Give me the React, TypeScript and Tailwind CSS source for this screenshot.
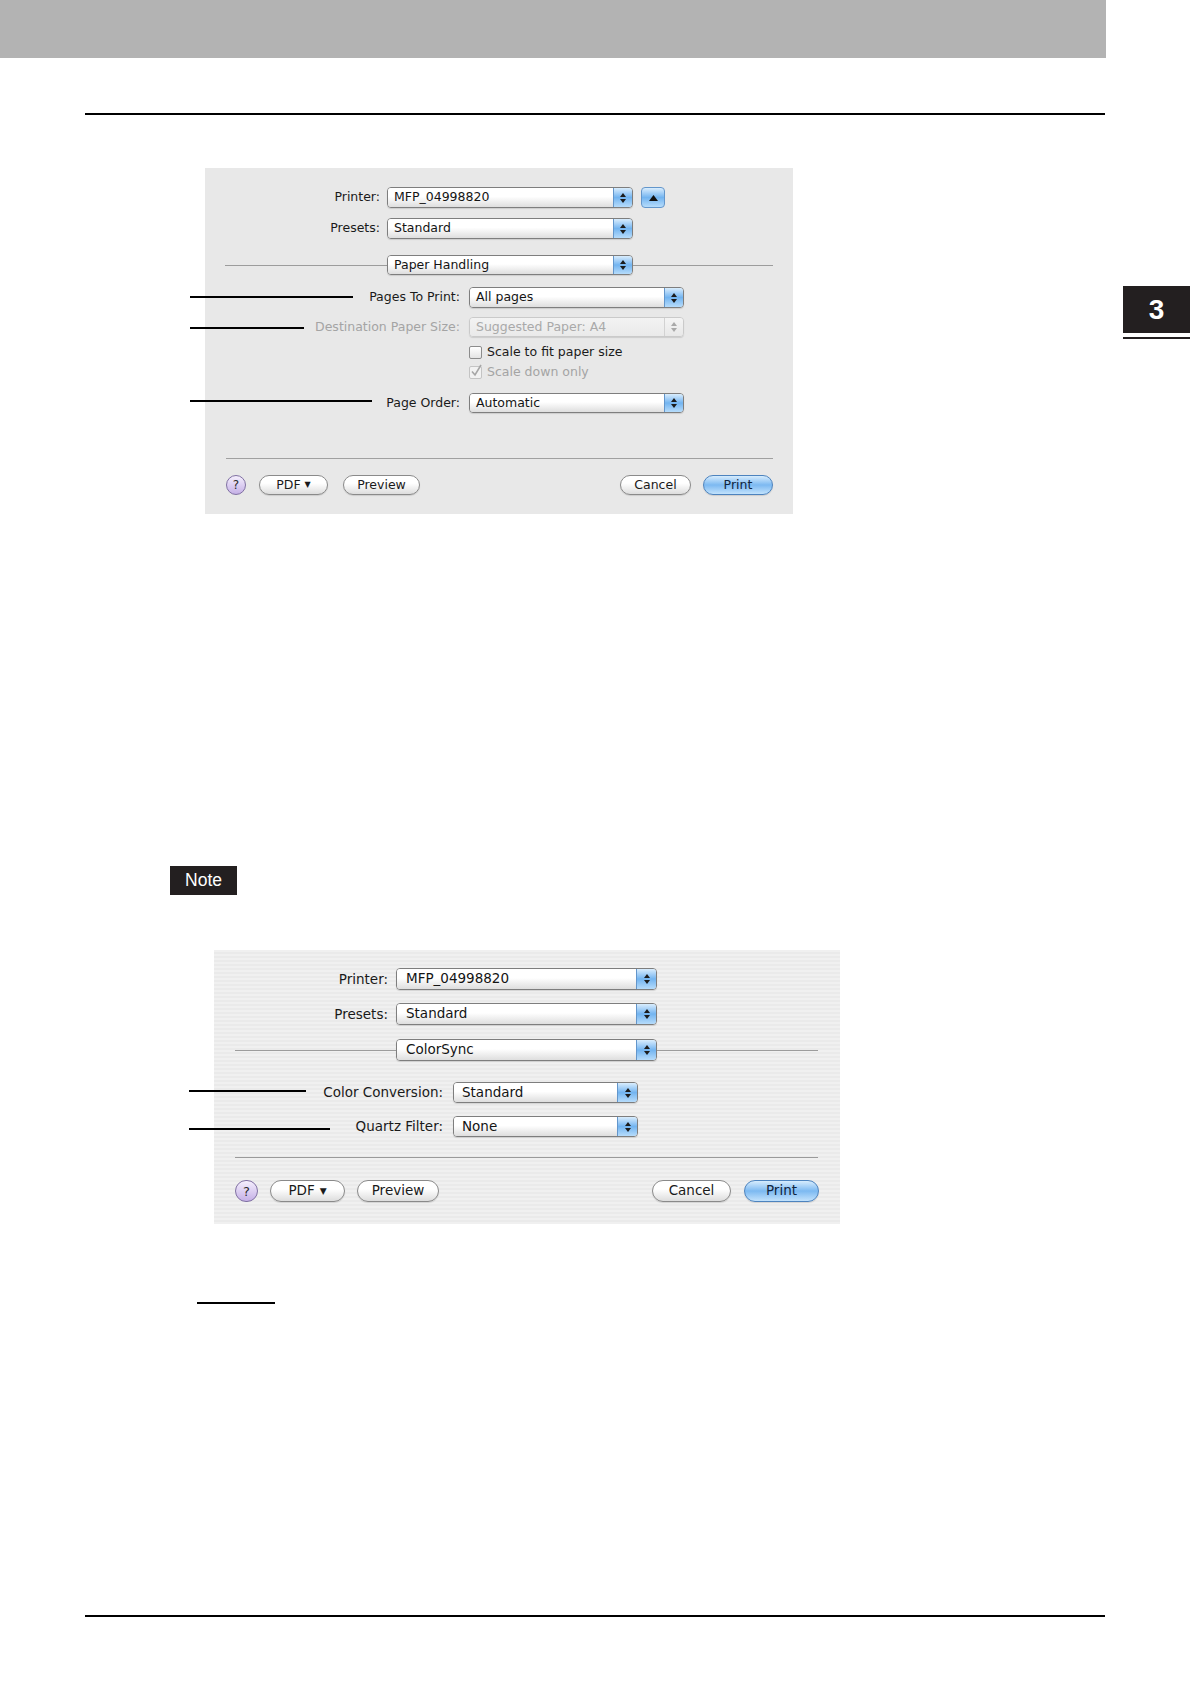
import React from "react";
import clsx from "clsx";

const Tri = ({ dir, color, w = 6, h = 4 }: { dir: "up" | "down"; color: string; w?: number; h?: number }) => (
  <svg width={w} height={h} viewBox="0 0 6 4" className="block">
    {dir === "up" ? <path d="M3 0L6 4H0Z" fill={color} /> : <path d="M0 0H6L3 4Z" fill={color} />}
  </svg>
);

function Popup({
  className,
  label,
  disabled = false,
  stepW = "w-[19px]",
  pad = "pl-[6px]",
}: {
  className?: string;
  label: string;
  disabled?: boolean;
  stepW?: string;
  pad?: string;
}) {
  return (
    <div
      className={clsx(
        "flex overflow-hidden rounded-[4px] border shadow-[0_1px_1px_rgba(0,0,0,0.12)]",
        disabled ? "border-[#cacaca]" : "border-[#7e7e7e]",
        className
      )}
    >
      <div
        className={clsx(
          "flex flex-1 items-center whitespace-nowrap leading-none bg-linear-to-b",
          pad,
          disabled ? "from-[#f3f3f3] to-[#eaeaea] text-[#a9a9a9]" : "from-white from-45% to-[#dedede] text-[#141414]"
        )}
      >
        {label}
      </div>
      <div
        className={clsx(
          "flex flex-col items-center justify-center gap-[2px] border-l",
          stepW,
          disabled
            ? "border-[#d2d2d2] bg-linear-to-b from-[#f4f4f4] to-[#e8e8e8]"
            : "border-[#6396cb] bg-linear-to-b from-[#d9edfd] via-[#72b4f0] to-[#b6dcfb]"
        )}
      >
        <Tri dir="up" color={disabled ? "#a9a9a9" : "#1c1c1c"} />
        <Tri dir="down" color={disabled ? "#a9a9a9" : "#1c1c1c"} />
      </div>
    </div>
  );
}

function Pill({
  className,
  children,
  primary = false,
}: {
  className?: string;
  children: React.ReactNode;
  primary?: boolean;
}) {
  return (
    <div
      className={clsx(
        "flex items-center justify-center rounded-full border leading-none shadow-[0_1px_1px_rgba(0,0,0,0.12)]",
        primary
          ? "border-[#4d83be] bg-linear-to-b from-[#d6ecfd] via-[#7cb9f1] to-[#c2e2fc] text-[#10243d]"
          : "border-[#8a8a8a] bg-linear-to-b from-white from-40% to-[#dddddd] text-[#1a1a1a]",
        className
      )}
    >
      {children}
    </div>
  );
}

function Help({ className }: { className?: string }) {
  return (
    <div
      className={clsx(
        "flex items-center justify-center rounded-full border border-[#8070a3] bg-linear-to-b from-[#f5effd] to-[#c5b0e6] leading-none text-[#2a2a2a]",
        className
      )}
    >
      ?
    </div>
  );
}

function Dialog1() {
  return (
    <div className="relative flex h-[346px] w-[588px] flex-col bg-[#e8e8e8] pt-[19px] text-[12.5px] text-[#1a1a1a] font-['DejaVu_Sans',sans-serif]">
      {/* Printer */}
      <div className="flex h-[21px] items-center">
        <div className="w-[175px] text-right">Printer:</div>
        <Popup className="ml-[7px] h-[21px] w-[246px]" label="MFP_04998820" />
        <div className="ml-[8px] flex h-[21px] w-[24px] items-center justify-center rounded-[4px] border border-[#6396cb] bg-linear-to-b from-[#d9edfd] via-[#72b4f0] to-[#b6dcfb]">
          <Tri dir="up" color="#111" w={9} h={6} />
        </div>
      </div>
      {/* Presets */}
      <div className="mt-[10px] flex h-[21px] items-center">
        <div className="w-[175px] text-right">Presets:</div>
        <Popup className="ml-[7px] h-[21px] w-[246px]" label="Standard" />
      </div>
      {/* Paper Handling */}
      <div className="mt-[16px] flex h-[20px] items-center">
        <div className="ml-[20px] h-px w-[162px] bg-[#9c9c9c]" />
        <Popup className="h-[20px] w-[246px]" label="Paper Handling" />
        <div className="h-px w-[140px] bg-[#9c9c9c]" />
      </div>
      {/* Pages To Print */}
      <div className="relative mt-[12px] flex h-[21px] items-center">
        <div className="absolute left-[-15px] top-[9px] h-[2px] w-[163px] bg-black" />
        <div className="w-[255px] text-right">Pages To Print:</div>
        <Popup className="ml-[9px] h-[21px] w-[215px]" label="All pages" />
      </div>
      {/* Destination */}
      <div className="relative mt-[9px] flex h-[20px] items-center">
        <div className="absolute left-[-15px] top-[10px] h-[2px] w-[114px] bg-black" />
        <div className="w-[255px] text-right text-[#a4a4a4]">Destination Paper Size:</div>
        <Popup className="ml-[9px] h-[20px] w-[215px]" label="Suggested Paper: A4" disabled />
      </div>
      {/* Scale to fit */}
      <div className="mt-[9px] flex h-[13px] items-center pl-[264px]">
        <div className="h-[13px] w-[13px] rounded-[2px] border border-[#8c8c8c] bg-linear-to-b from-white to-[#e4e4e4]" />
        <div className="ml-[5px] leading-none">Scale to fit paper size</div>
      </div>
      {/* Scale down only */}
      <div className="mt-[7px] flex h-[13px] items-center pl-[264px] text-[#a4a4a4]">
        <div className="relative h-[13px] w-[13px] rounded-[2px] border border-[#c4c4c4] bg-[#f2f2f2]">
          <svg width="13" height="14" viewBox="0 0 13 14" className="absolute left-[0px] top-[-3px]">
            <path d="M2 7.5L5 11L11 1" fill="none" stroke="#a6a6a6" strokeWidth="1.6" />
          </svg>
        </div>
        <div className="ml-[5px] leading-none">Scale down only</div>
      </div>
      {/* Page Order */}
      <div className="relative mt-[14px] flex h-[20px] items-center">
        <div className="absolute left-[-15px] top-[7px] h-[2px] w-[182px] bg-black" />
        <div className="w-[255px] text-right">Page Order:</div>
        <Popup className="ml-[9px] h-[20px] w-[215px]" label="Automatic" />
      </div>
      {/* separator */}
      <div className="ml-[21px] mt-[45px] h-px w-[547px] bg-[#a0a0a0]" />
      {/* buttons */}
      <div className="mt-[16px] flex h-[20px] items-center pl-[21px] pr-[20px]">
        <Help className="h-[20px] w-[20px] text-[12px]" />
        <Pill className="ml-[13px] h-[20px] w-[69px] gap-[4px]">
          <span>PDF</span>
          <span className="text-[8px]">▼</span>
        </Pill>
        <Pill className="ml-[15px] h-[20px] w-[77px]">Preview</Pill>
        <Pill className="ml-auto h-[20px] w-[71px]">Cancel</Pill>
        <Pill primary className="ml-[12px] h-[20px] w-[70px]">
          Print
        </Pill>
      </div>
    </div>
  );
}

function Dialog2() {
  return (
    <div className="relative flex h-[274px] w-[626px] flex-col bg-[repeating-linear-gradient(180deg,#f0f0f0_0px,#f0f0f0_2px,#eaeaea_2px,#eaeaea_4px)] pt-[18px] text-[13.5px] text-[#1a1a1a] font-['DejaVu_Sans',sans-serif]">
      {/* Printer */}
      <div className="flex h-[22px] items-center">
        <div className="w-[174px] text-right">Printer:</div>
        <Popup className="ml-[8px] h-[22px] w-[261px]" label="MFP_04998820" stepW="w-[20px]" pad="pl-[9px]" />
      </div>
      {/* Presets */}
      <div className="mt-[13px] flex h-[22px] items-center">
        <div className="w-[174px] text-right">Presets:</div>
        <Popup className="ml-[8px] h-[22px] w-[261px]" label="Standard" stepW="w-[20px]" pad="pl-[9px]" />
      </div>
      {/* ColorSync */}
      <div className="mt-[14px] flex h-[22px] items-center">
        <div className="ml-[21px] h-px w-[161px] bg-[#9c9c9c]" />
        <Popup className="h-[22px] w-[261px]" label="ColorSync" stepW="w-[20px]" pad="pl-[9px]" />
        <div className="h-px w-[161px] bg-[#9c9c9c]" />
      </div>
      {/* Color Conversion */}
      <div className="relative mt-[21px] flex h-[21px] items-center">
        <div className="absolute left-[-25px] top-[8px] h-[2px] w-[117px] bg-black" />
        <div className="w-[229px] text-right">Color Conversion:</div>
        <Popup className="ml-[10px] h-[21px] w-[185px]" label="Standard" stepW="w-[20px]" pad="pl-[8px]" />
      </div>
      {/* Quartz Filter */}
      <div className="relative mt-[13px] flex h-[21px] items-center">
        <div className="absolute left-[-25px] top-[12px] h-[2px] w-[141px] bg-black" />
        <div className="w-[229px] text-right">Quartz Filter:</div>
        <Popup className="ml-[10px] h-[21px] w-[185px]" label="None" stepW="w-[20px]" pad="pl-[8px]" />
      </div>
      {/* separator */}
      <div className="ml-[21px] mt-[20px] h-px w-[583px] bg-[#9a9a9a]" />
      {/* buttons */}
      <div className="mt-[22px] flex h-[22px] items-center pl-[21px] pr-[21px]">
        <Help className="h-[22px] w-[23px] text-[13px]" />
        <Pill className="ml-[12px] h-[22px] w-[75px] gap-[5px]">
          <span>PDF</span>
          <span className="text-[9px]">▼</span>
        </Pill>
        <Pill className="ml-[12px] h-[22px] w-[82px]">Preview</Pill>
        <Pill className="ml-auto h-[22px] w-[79px]">Cancel</Pill>
        <Pill primary className="ml-[13px] h-[22px] w-[75px]">
          Print
        </Pill>
      </div>
    </div>
  );
}

export default function App() {
  return (
    <div className="h-[1684px] w-[1190px] overflow-hidden bg-white">
      <div className="h-[58px] w-[1106px] bg-[#b3b3b3]" />
      <div className="ml-[85px] mt-[55px] h-[2px] w-[1020px] bg-black" />
      <div className="flex">
        <div className="ml-[205px] mt-[53px]">
          <Dialog1 />
        </div>
        <div className="ml-auto mt-[171px] flex w-[67px] flex-col">
          <div className="flex h-[47px] items-center justify-center bg-[#231f20] text-[28px] font-bold leading-none text-white font-['Liberation_Sans',Arial,sans-serif]">
            3
          </div>
          <div className="mt-[4px] h-[2px] w-full bg-[#231f20]" />
        </div>
      </div>
      <div className="ml-[170px] mt-[352px] flex h-[29px] w-[67px] items-center justify-center bg-[#231f20] text-[17.5px] leading-none text-white font-['Liberation_Sans',Arial,sans-serif]">
        Note
      </div>
      <div className="ml-[214px] mt-[55px]">
        <Dialog2 />
      </div>
      <div className="ml-[197px] mt-[78px] h-[2px] w-[78px] bg-black" />
      <div className="ml-[85px] mt-[311px] h-[2px] w-[1020px] bg-black" />
    </div>
  );
}
